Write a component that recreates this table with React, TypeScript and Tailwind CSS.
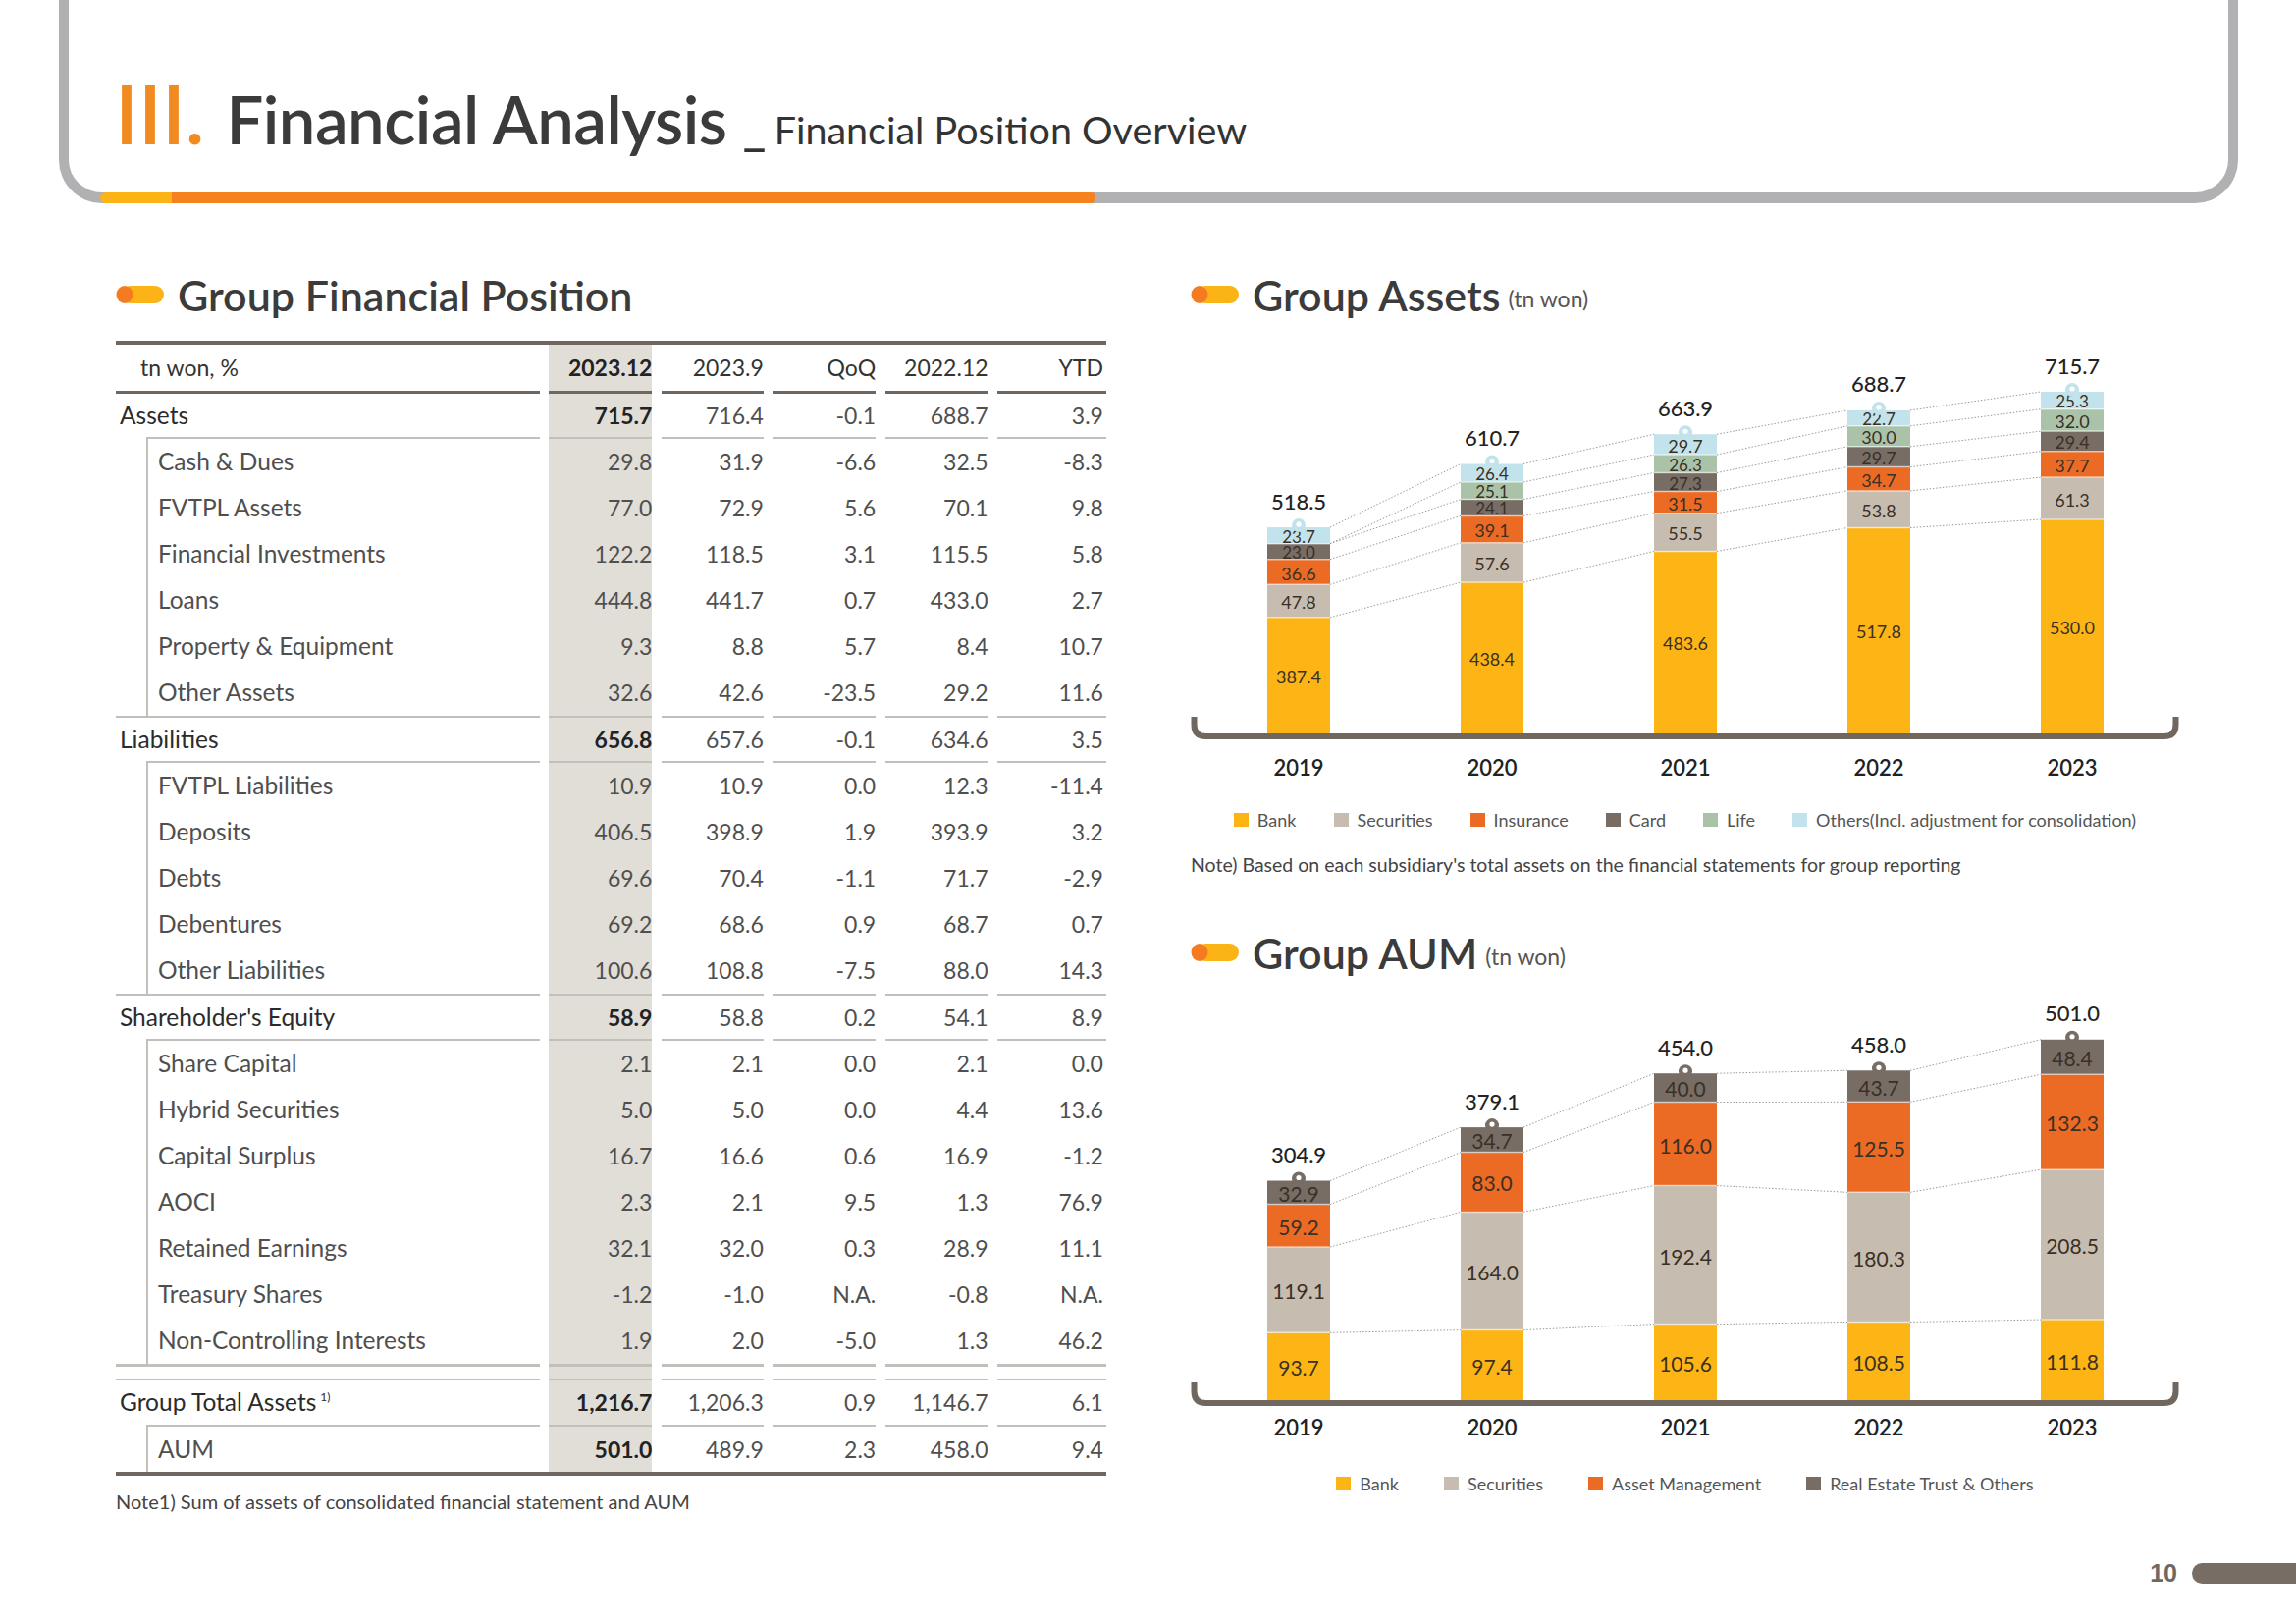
import React from "react";

const C = {
  bank: "#fdb515",
  sec: "#c6bdb0",
  ins: "#ec6b24",
  card: "#776d65",
  life: "#aac3a8",
  oth: "#c3e3ec",
};

type Bar = { total: string; values: number[] };

const assetBars: Bar[] = [
  { total: "518.5", values: [387.4, 47.8, 36.6, 23.0, 0, 23.7] },
  { total: "610.7", values: [438.4, 57.6, 39.1, 24.1, 25.1, 26.4] },
  { total: "663.9", values: [483.6, 55.5, 31.5, 27.3, 26.3, 29.7] },
  { total: "688.7", values: [517.8, 53.8, 34.7, 29.7, 30.0, 22.7] },
  { total: "715.7", values: [530.0, 61.3, 37.7, 29.4, 32.0, 25.3] },
];

const aumBars: Bar[] = [
  { total: "304.9", values: [93.7, 119.1, 59.2, 32.9] },
  { total: "379.1", values: [97.4, 164.0, 83.0, 34.7] },
  { total: "454.0", values: [105.6, 192.4, 116.0, 40.0] },
  { total: "458.0", values: [108.5, 180.3, 125.5, 43.7] },
  { total: "501.0", values: [111.8, 208.5, 132.3, 48.4] },
];

const years = ["2019", "2020", "2021", "2022", "2023"];

interface ChartProps {
  bars: Bar[];
  colors: string[];
  height: number;
  base: number;
  scale: number;
  bankOffset: number;
  labelSize: number;
  bracketTop: number;
}

function StackedChart({ bars, colors, height, base, scale, bankOffset, labelSize, bracketTop }: ChartProps) {
  const cx = (i: number) => 110 + 197 * i;
  const stacks = bars.map((b) => {
    let cur = base;
    return b.values.map((v, k) => {
      const h = v === 0 ? 0 : k === 0 ? v * scale - bankOffset : v * scale;
      const top = cur - h;
      const seg = { v, h, top };
      cur = top;
      return seg;
    });
  });
  const c = base + 3;

  return (
    <svg width={1007} height={height} className="block">
      {stacks.slice(0, -1).map((segs, i) =>
        segs.map((s, k) => (
          <line
            key={`l${i}-${k}`}
            x1={cx(i) + 32}
            y1={s.top}
            x2={cx(i + 1) - 32}
            y2={stacks[i + 1][k].top}
            stroke="#9a9a9a"
            strokeWidth={1}
            strokeDasharray="1.5 1.8"
          />
        ))
      )}
      {stacks.map((segs, i) => {
        const top = segs[segs.length - 1].top;
        return (
          <g key={`b${i}`}>
            {segs.map((s, k) =>
              s.h > 0 ? (
                <rect key={k} x={cx(i) - 32} y={s.top} width={64} height={s.h} fill={colors[k]} />
              ) : null
            )}
            {segs.slice(0, -1).map((s, k) =>
              s.h > 0 ? (
                <line key={`w${k}`} x1={cx(i) - 32} x2={cx(i) + 32} y1={s.top} y2={s.top} stroke="#ffffff" strokeOpacity={0.55} strokeWidth={1.5} />
              ) : null
            )}
            {segs.map((s, k) =>
              s.h > 0 ? (
                <text
                  key={`t${k}`}
                  x={cx(i)}
                  y={s.top + s.h / 2 + 1}
                  textAnchor="middle"
                  dominantBaseline="central"
                  fontFamily="Lato, sans-serif"
                  fontSize={s.h < 20 ? labelSize - 1 : labelSize}
                  fill="#3a3026"
                >
                  {s.v.toFixed(1)}
                </text>
              ) : null
            )}
            <circle cx={cx(i)} cy={top - 2} r={7} fill={colors[colors.length - 1]} />
            <circle cx={cx(i)} cy={top - 3} r={2.6} fill="#ffffff" />
            <text
              x={cx(i)}
              y={top - 27}
              textAnchor="middle"
              dominantBaseline="central"
              fontFamily="Lato, sans-serif"
              fontSize={22}
              fontWeight={500}
              fill="#222222"
            >
              {bars[i].total}
            </text>
          </g>
        );
      })}
      <path
        d={`M3.5 ${bracketTop} L3.5 ${c - 12} Q3.5 ${c} 15.5 ${c} L991.5 ${c} Q1003.5 ${c} 1003.5 ${c - 12} L1003.5 ${bracketTop}`}
        fill="none"
        stroke="#70675f"
        strokeWidth={6}
      />
    </svg>
  );
}

function SectionIcon() {
  return (
    <svg width="49" height="18" viewBox="0 0 49 18" className="shrink-0">
      <rect x="6" y="0" width="43" height="18" rx="9" fill="#fbb316" />
      <ellipse cx="9" cy="9" rx="8.5" ry="9" fill="#f47b20" />
    </svg>
  );
}

function SectionTitle({ title, unit }: { title: string; unit?: string }) {
  return (
    <div className="flex items-center h-[48px]">
      <SectionIcon />
      <span className="ml-[14px] text-[43px] leading-none font-semibold text-[#3b3b3b]">{title}</span>
      {unit && <span className="ml-[8px] mt-[8px] text-[23px] text-[#555]">{unit}</span>}
    </div>
  );
}

function Years() {
  return (
    <div className="grid grid-cols-[197px_197px_197px_197px_197px] pl-[11.5px] h-[30px] items-center">
      {years.map((y) => (
        <div key={y} className="text-center text-[22px] font-semibold text-[#222]">
          {y}
        </div>
      ))}
    </div>
  );
}

function Legend({ items, gap }: { items: [string, string][]; gap: string }) {
  return (
    <div className={`flex justify-center items-center h-[20px] ${gap}`}>
      {items.map(([label, color]) => (
        <div key={label} className="flex items-center gap-[9px]">
          <span className="w-[15px] h-[14px] inline-block" style={{ backgroundColor: color }} />
          <span className="text-[18px] text-[#555]">{label}</span>
        </div>
      ))}
    </div>
  );
}

type Kind = "header" | "section" | "sub" | "subLast" | "subDouble" | "spacer" | "total" | "aum";

interface Row {
  kind: Kind;
  label: string;
  v: string[];
  sup?: string;
}

const rows: Row[] = [
  { kind: "header", label: "tn won, %", v: ["2023.12", "2023.9", "QoQ", "2022.12", "YTD"] },
  { kind: "section", label: "Assets", v: ["715.7", "716.4", "-0.1", "688.7", "3.9"] },
  { kind: "sub", label: "Cash & Dues", v: ["29.8", "31.9", "-6.6", "32.5", "-8.3"] },
  { kind: "sub", label: "FVTPL Assets", v: ["77.0", "72.9", "5.6", "70.1", "9.8"] },
  { kind: "sub", label: "Financial Investments", v: ["122.2", "118.5", "3.1", "115.5", "5.8"] },
  { kind: "sub", label: "Loans", v: ["444.8", "441.7", "0.7", "433.0", "2.7"] },
  { kind: "sub", label: "Property & Equipment", v: ["9.3", "8.8", "5.7", "8.4", "10.7"] },
  { kind: "subLast", label: "Other Assets", v: ["32.6", "42.6", "-23.5", "29.2", "11.6"] },
  { kind: "section", label: "Liabilities", v: ["656.8", "657.6", "-0.1", "634.6", "3.5"] },
  { kind: "sub", label: "FVTPL Liabilities", v: ["10.9", "10.9", "0.0", "12.3", "-11.4"] },
  { kind: "sub", label: "Deposits", v: ["406.5", "398.9", "1.9", "393.9", "3.2"] },
  { kind: "sub", label: "Debts", v: ["69.6", "70.4", "-1.1", "71.7", "-2.9"] },
  { kind: "sub", label: "Debentures", v: ["69.2", "68.6", "0.9", "68.7", "0.7"] },
  { kind: "subLast", label: "Other Liabilities", v: ["100.6", "108.8", "-7.5", "88.0", "14.3"] },
  { kind: "section", label: "Shareholder's Equity", v: ["58.9", "58.8", "0.2", "54.1", "8.9"] },
  { kind: "sub", label: "Share Capital", v: ["2.1", "2.1", "0.0", "2.1", "0.0"] },
  { kind: "sub", label: "Hybrid Securities", v: ["5.0", "5.0", "0.0", "4.4", "13.6"] },
  { kind: "sub", label: "Capital Surplus", v: ["16.7", "16.6", "0.6", "16.9", "-1.2"] },
  { kind: "sub", label: "AOCI", v: ["2.3", "2.1", "9.5", "1.3", "76.9"] },
  { kind: "sub", label: "Retained Earnings", v: ["32.1", "32.0", "0.3", "28.9", "11.1"] },
  { kind: "sub", label: "Treasury Shares", v: ["-1.2", "-1.0", "N.A.", "-0.8", "N.A."] },
  { kind: "subDouble", label: "Non-Controlling Interests", v: ["1.9", "2.0", "-5.0", "1.3", "46.2"] },
  { kind: "spacer", label: "", v: ["", "", "", "", ""] },
  { kind: "total", label: "Group Total Assets", sup: "1)", v: ["1,216.7", "1,206.3", "0.9", "1,146.7", "6.1"] },
  { kind: "aum", label: "AUM", v: ["501.0", "489.9", "2.3", "458.0", "9.4"] },
];

const contentH: Record<Kind, string> = {
  header: "h-[47px]",
  section: "h-[44px]",
  sub: "h-[47px]",
  subLast: "h-[47px]",
  subDouble: "h-[47px]",
  spacer: "h-[12px]",
  total: "h-[45px]",
  aum: "h-[46px]",
};

const lineCls: Record<Kind, string> = {
  header: "h-[3px] bg-[#6e665f]",
  section: "h-[2px] bg-[#c3c0bc]",
  sub: "",
  subLast: "h-[2px] bg-[#c3c0bc]",
  subDouble: "h-[3px] bg-[#c3c0bc]",
  spacer: "h-[2px] bg-[#c3c0bc]",
  total: "h-[2px] bg-[#c3c0bc]",
  aum: "",
};

function TableRow({ row }: { row: Row }) {
  const { kind } = row;
  const indentLine = kind === "section" || kind === "total";
  const subStyle = kind === "sub" || kind === "subLast" || kind === "subDouble" || kind === "aum";
  const boldFirst = kind === "section" || kind === "total" || kind === "aum" || kind === "header";

  return (
    <div className="grid grid-cols-[432px_105px_104px_105px_105px_111px] gap-x-[9.4px]">
      <div className="flex flex-col text-[24.5px]">
        <div className={`${contentH[kind]} flex items-center`}>
          {subStyle ? (
            <div className="ml-[31px] h-full border-l-2 border-[#c3c0bc] pl-[10px] flex items-center text-[#4f4f4f]">
              {row.label}
            </div>
          ) : kind === "header" ? (
            <span className="pl-[25px] text-[#333] text-[23px]">{row.label}</span>
          ) : (
            <span className="pl-[4px] text-[#2b2b2b]">
              {row.label}
              {row.sup && <sup className="text-[12px] ml-[4px] -top-[10px]">{row.sup}</sup>}
            </span>
          )}
        </div>
        {lineCls[kind] && <div className={`${lineCls[kind]} ${indentLine ? "ml-[31px]" : ""}`} />}
      </div>
      {row.v.map((val, i) => (
        <div key={i} className={`flex flex-col ${i === 0 ? "bg-[#e1ddd7]" : ""}`}>
          <div
            className={`${contentH[kind]} flex items-center justify-end ${i === 4 ? "pr-[3px]" : ""} ${
              i === 0 && boldFirst ? "font-bold text-[#222]" : kind === "header" ? "text-[#333]" : "text-[#4f4f4f]"
            }`}
          >
            {val}
          </div>
          {lineCls[kind] && <div className={lineCls[kind]} />}
        </div>
      ))}
    </div>
  );
}

export default function App() {
  return (
    <div className="w-[2339px] h-[1654px] bg-white flex flex-col overflow-hidden font-['Lato',sans-serif]">
      <div className="ml-[60px] w-[2220px] h-[207px] shrink-0 border-x-[10px] border-b-[11px] border-[#b1b1b4] rounded-b-[44px] relative">
        <div className="flex items-baseline pl-[47px] pt-[74px] leading-none">
          <span className="text-[83px] text-[#f28a22] font-semibold">III.</span>
          <span className="ml-[22px] text-[67px] font-semibold text-[#3b3b3b] tracking-[-0.5px]">Financial Analysis</span>
          <span className="ml-[16px] text-[52px] font-semibold text-[#333]">_</span>
          <span className="ml-[8px] text-[39.5px] text-[#333]">Financial Position Overview</span>
        </div>
        <div className="absolute left-[32px] -bottom-[11px] h-[11px] flex">
          <div className="w-[73px] h-full bg-[#fbb316] rounded-l-full" />
          <div className="w-[940px] h-full bg-[#f5821f] rounded-r-[3px]" />
        </div>
      </div>

      <div className="flex pl-[118px] pt-[69px]">
        <div className="w-[1009px]">
          <SectionTitle title="Group Financial Position" />
          <div className="mt-[23px] border-t-[4px] border-b-[4px] border-[#6e665f] text-[23px]">
            {rows.map((r, i) => (
              <TableRow key={i} row={r} />
            ))}
          </div>
          <p className="mt-[11px] text-[20px] text-[#444]">Note1) Sum of assets of consolidated financial statement and AUM</p>
        </div>

        <div className="w-[1007px] ml-[86px]">
          <SectionTitle title="Group Assets" unit="(tn won)" />
          <div className="mt-[16px]">
            <StackedChart
              bars={assetBars}
              colors={[C.bank, C.sec, C.ins, C.card, C.life, C.oth]}
              height={416}
              base={407}
              scale={0.7}
              bankOffset={153}
              labelSize={18}
              bracketTop={390}
            />
          </div>
          <div className="mt-[9px]">
            <Years />
          </div>
          <div className="mt-[30px]">
            <Legend
              gap="gap-[38px]"
              items={[
                ["Bank", C.bank],
                ["Securities", C.sec],
                ["Insurance", C.ins],
                ["Card", C.card],
                ["Life", C.life],
                ["Others(Incl. adjustment for consolidation)", C.oth],
              ]}
            />
          </div>
          <p className="mt-[21px] h-[24px] text-[19.5px] text-[#444]">
            Note) Based on each subsidiary's total assets on the financial statements for group reporting
          </p>

          <div className="mt-[56px]">
            <SectionTitle title="Group AUM" unit="(tn won)" />
          </div>
          <div className="mt-[15px]">
            <StackedChart
              bars={aumBars}
              colors={[C.bank, C.sec, C.ins, C.card]}
              height={426}
              base={417}
              scale={0.733}
              bankOffset={0}
              labelSize={21}
              bracketTop={399}
            />
          </div>
          <div className="mt-[2px]">
            <Years />
          </div>
          <div className="mt-[34px]">
            <Legend
              gap="gap-[46px]"
              items={[
                ["Bank", C.bank],
                ["Securities", C.sec],
                ["Asset Management", C.ins],
                ["Real Estate Trust & Others", C.card],
              ]}
            />
          </div>
        </div>
      </div>

      <div className="mt-auto mb-[41px] flex justify-end items-center h-[21px]">
        <span className="font-['Liberation_Sans',sans-serif] font-bold text-[25px] text-[#6f6862] leading-none">10</span>
        <div className="ml-[15px] w-[106px] h-[21px] bg-[#776d65] rounded-l-full" />
      </div>
    </div>
  );
}
